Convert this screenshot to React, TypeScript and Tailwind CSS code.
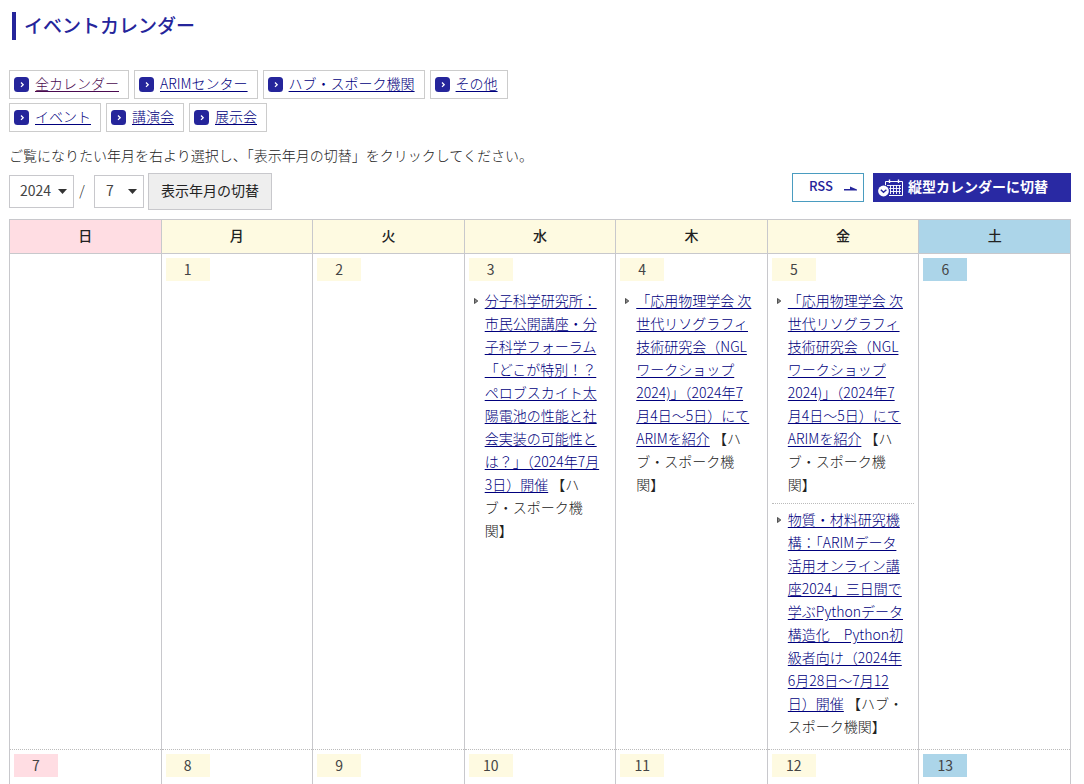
import { Fragment } from "react"

type Event = {
  lines: string[]
  category: string[]
}

type Day = {
  date: number | null
  events?: Event[]
}

const categoryLinks = [
  [
    { label: "全カレンダー", visited: true },
    { label: "ARIMセンター" },
    { label: "ハブ・スポーク機関" },
    { label: "その他" },
  ],
  [{ label: "イベント" }, { label: "講演会" }, { label: "展示会" }],
]

const weekdays = ["日", "月", "火", "水", "木", "金", "土"]

const nglWorkshop: Event = {
  lines: [
    "「応用物理学会 次",
    "世代リソグラフィ",
    "技術研究会（NGL",
    "ワークショップ",
    "2024)」（2024年7",
    "月4日～5日）にて",
    "ARIMを紹介",
  ],
  category: ["【ハ", "ブ・スポーク機", "関】"],
}

const weeks: Day[][] = [
  [
    { date: null },
    { date: 1 },
    { date: 2 },
    {
      date: 3,
      events: [
        {
          lines: [
            "分子科学研究所：",
            "市民公開講座・分",
            "子科学フォーラム",
            "「どこが特別！？",
            "ペロブスカイト太",
            "陽電池の性能と社",
            "会実装の可能性と",
            "は？」（2024年7月",
            "3日）開催",
          ],
          category: ["【ハ", "ブ・スポーク機", "関】"],
        },
      ],
    },
    { date: 4, events: [nglWorkshop] },
    {
      date: 5,
      events: [
        nglWorkshop,
        {
          lines: [
            "物質・材料研究機",
            "構：「ARIMデータ",
            "活用オンライン講",
            "座2024」三日間で",
            "学ぶPythonデータ",
            "構造化　Python初",
            "級者向け（2024年",
            "6月28日～7月12",
            "日）開催",
          ],
          category: ["【ハブ・", "スポーク機関】"],
        },
      ],
    },
    { date: 6 },
  ],
  [
    { date: 7 },
    { date: 8 },
    { date: 9 },
    { date: 10 },
    { date: 11 },
    { date: 12 },
    { date: 13 },
  ],
]

function dayColor(index: number) {
  if (index === 0) return "bg-[#ffdde3]"
  if (index === 6) return "bg-[#acd5e9]"
  return "bg-[#fefae1]"
}

function ChevronBadge() {
  return (
    <svg viewBox="0 0 15 15" className="h-[15px] w-[15px] shrink-0" aria-hidden="true">
      <rect width="15" height="15" rx="3.5" fill="#25259b" />
      <path d="M7 5.500l2.200 2.200L7 9.900" fill="none" stroke="#fff" strokeWidth="1.3" />
    </svg>
  )
}

function CalendarIcon() {
  return (
    <svg viewBox="0 0 26 18" className="h-[18px] w-[26px] shrink-0" aria-hidden="true">
      <g fill="none" stroke="#fff">
        <path d="M7.500 8V2.500h17V16.500H11" />
        <path d="M11.500 .5v3.500M20.500 .5v3.500" strokeWidth="1.400" />
        <path
          d="M9 6.500h14M11 9.500h12M12 12.500h11M12.500 6v9M15.500 6v9M18.500 6v9M21.500 6v9"
          strokeWidth=".900"
        />
      </g>
      <circle cx="5.500" cy="12" r="6.300" fill="#2929a3" />
      <circle cx="5.500" cy="12" r="5.400" fill="#fff" />
      <path d="M2.800 10.800l2.700 2.500L8.400 10.800" fill="none" stroke="#25259b" strokeWidth="1.400" />
    </svg>
  )
}

function DateSelect({ label, value, className }: { label: string; value: string; className: string }) {
  return (
    <div className="relative">
      <select
        aria-label={label}
        defaultValue={value}
        className={`h-[33px] appearance-none border border-[#c8c8cc] bg-white pb-1 text-sm font-normal text-[#444] ${className}`}
      >
        <option value={value}>{value}</option>
      </select>
      <svg
        viewBox="0 0 9 5"
        className="pointer-events-none absolute top-[14px] right-[7px] h-[5px] w-[9px]"
        aria-hidden="true"
      >
        <path d="M0 0h9L4.500 5z" fill="#333" />
      </svg>
    </div>
  )
}

function Lines({ lines }: { lines: string[] }) {
  return lines.map((line, i) => (
    <Fragment key={line}>
      {i > 0 && <br />}
      {line}
    </Fragment>
  ))
}

function EventItem({ event }: { event: Event }) {
  return (
    <li className="flex border-b border-dotted border-[#bbb] pt-1 pb-[7px] pl-[5px] leading-[23px] last:border-b-0">
      <svg viewBox="0 0 5 8" className="mt-[8px] mr-[6px] h-[8px] w-[5px] shrink-0" aria-hidden="true">
        <path d="M.500 1.500v5L3.800 4z" fill="#888" stroke="#444" strokeWidth=".900" />
      </svg>
      <div className="whitespace-nowrap">
        <a href="#" className="text-[#00007d] underline underline-offset-2">
          <Lines lines={event.lines} />
        </a>{" "}
        <Lines lines={event.category} />
      </div>
    </li>
  )
}

export default function App() {
  return (
    <main
      lang="ja"
      className="bg-white pt-3 pr-[13px] pl-[9px] font-['Noto_Sans_CJK_JP',sans-serif] text-sm font-light text-[#222]"
    >
      <h1 className="ml-[3px] border-l-4 border-[#25259b] pb-[2px] pl-2 text-[19px] leading-[26px] font-medium text-[#25259b]">
        イベントカレンダー
      </h1>

      <nav className="mt-[30px] flex flex-col gap-1">
        {categoryLinks.map((row, i) => (
          <ul key={i} className="flex gap-[5px]">
            {row.map((link) => (
              <li
                key={link.label}
                className="flex h-[29px] items-center gap-[6px] border border-[#ccc] pr-[9px] pl-1"
              >
                <ChevronBadge />
                <a
                  href="#"
                  className={`pb-1 underline underline-offset-2 ${link.visited ? "text-[#4b0a50]" : "text-[#00007d]"}`}
                >
                  {link.label}
                </a>
              </li>
            ))}
          </ul>
        ))}
      </nav>

      <p className="mt-3 mb-[6px] leading-[23px]">
        ご覧になりたい年月を右より選択し、「表示年月の切替」をクリックしてください。
      </p>

      <div className="flex items-start justify-between">
        <form className="flex items-center" onSubmit={(e) => e.preventDefault()}>
          <DateSelect label="年" value="2024" className="w-[65px] pl-[10px]" />
          <span className="w-5 pr-1 pb-1 text-center">/</span>
          <DateSelect label="月" value="7" className="w-[50px] pl-[11px]" />
          <button
            type="submit"
            className="ml-1 h-[37px] border border-[#c8c8cc] bg-[#eee] px-3 pb-1 font-normal"
          >
            表示年月の切替
          </button>
        </form>

        <div className="flex gap-[9px]">
          <a
            href="#"
            className="flex h-[29px] w-[72px] items-center justify-between border border-[#4a9cc0] pr-[6px] pb-[2px] pl-4 text-[13px] font-medium text-[#25259b]"
          >
            RSS
            <svg viewBox="0 0 13 5" className="mt-1 h-[5px] w-[13px]" aria-hidden="true">
              <path d="M0 3h6V.500L13 3.500V4.500H0z" fill="#25259b" />
            </svg>
          </a>
          <a
            href="#"
            className="flex h-[29px] w-[198px] items-center gap-1 bg-[#2929a3] pl-[5px] font-bold text-white"
          >
            <CalendarIcon />
            <span className="pb-1">縦型カレンダーに切替</span>
          </a>
        </div>
      </div>

      <table className="mt-[9px] w-full table-fixed border-collapse border border-[#c8c8cc]">
        <thead>
          <tr>
            {weekdays.map((name, i) => (
              <th
                key={name}
                scope="col"
                className={`h-[34px] border border-[#c8c8cc] p-0 pb-1 font-medium ${dayColor(i)}`}
              >
                {name}
              </th>
            ))}
          </tr>
        </thead>
        <tbody>
          {weeks.map((week, w) => (
            <tr key={w} className="h-[150px] border-b border-dotted border-[#bbb]">
              {week.map((day, i) => (
                <td key={i} className="border-x border-solid border-[#c8c8cc] px-1 py-1 align-top">
                  {day.date && (
                    <>
                      <div className={`h-[23px] w-[44px] text-center leading-[23px] font-normal text-[#444] ${dayColor(i)}`}>
                        {day.date}
                      </div>
                      {day.events && (
                        <ul className="mt-1">
                          {day.events.map((event) => (
                            <EventItem key={event.lines[0]} event={event} />
                          ))}
                        </ul>
                      )}
                    </>
                  )}
                </td>
              ))}
            </tr>
          ))}
        </tbody>
      </table>
    </main>
  )
}
